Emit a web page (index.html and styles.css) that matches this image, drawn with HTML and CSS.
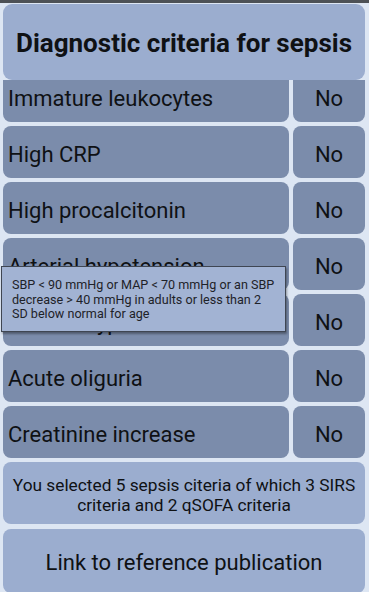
FILE: index.html
```html
<!DOCTYPE html>
<html lang="en">
  <head>
    <meta charset="UTF-8" />
    <meta name="viewport" content="width=device-width, initial-scale=1.0" />
    <title>Sepsis criteria</title>
    <link rel="stylesheet" href="styles.css">
  </head>
  <body>
    <div class="status-bar"></div>

    <div class="app">
      <div class="title-card">
        <h1>Diagnostic criteria for sepsis</h1>
      </div>

      <!-- Scrolled list, first row partly hidden under the title -->
      <div class="list-window">
        <div class="criteria-list">
          <div class="cell label">Immature leukocytes</div>
          <div class="cell answer">No</div>

          <div class="cell label">High CRP</div>
          <div class="cell answer">No</div>

          <div class="cell label">High procalcitonin</div>
          <div class="cell answer">No</div>

          <div class="cell label">Arterial hypotension</div>
          <div class="cell answer">No</div>

          <div class="cell label">Arterial hypoxemia</div>
          <div class="cell answer">No</div>

          <div class="cell label">Acute oliguria</div>
          <div class="cell answer">No</div>

          <div class="cell label">Creatinine increase</div>
          <div class="cell answer">No</div>
        </div>
      </div>

      <div class="summary-card">
        You selected 5 sepsis citeria of which 3 SIRS criteria and 2 qSOFA criteria
      </div>

      <div class="link-card">Link to reference publication</div>
    </div>

    <!-- Tooltip for the long-pressed row -->
    <div class="tooltip">
      SBP &lt; 90 mmHg or MAP &lt; 70 mmHg or an SBP decrease &gt; 40 mmHg in adults or less than 2 SD below normal for age
    </div>
  </body>
</html>
```

FILE: styles.css
```css
:root {
  --page-bg: #dde6f3;
  --light-card: #9badcf;
  --dark-cell: #7b8cab;
  --text: #0f1114;
  --status-bg: #4d5156;
}

* {
  margin: 0;
  padding: 0;
  box-sizing: border-box;
}

body {
  font-family: Roboto, "Noto Sans", sans-serif;
  background-color: var(--page-bg);
  color: var(--text);
  width: 369px;
  height: 592px;
  overflow: hidden;
  position: relative;
}

.status-bar {
  height: 3px;
  background-color: var(--status-bg);
}

.app {
  display: flex;
  flex-direction: column;
  padding: 1px 4px 0 3px;
}

/* Title */
.title-card {
  position: relative;
  z-index: 1;
  height: 76px;
  background-color: var(--light-card);
  border-radius: 9px;
  display: flex;
  align-items: center;
  justify-content: center;
  padding-top: 2px;
}

.title-card h1 {
  font-size: 26px;
  font-weight: 700;
  white-space: nowrap;
}

/* Criteria rows */
.list-window {
  height: 378px;
  overflow: hidden;
}

.criteria-list {
  display: grid;
  grid-template-columns: 1fr 72px;
  grid-auto-rows: 52px;
  gap: 4px;
  margin-top: -10px;
}

.cell {
  background-color: var(--dark-cell);
  border-radius: 8px;
  display: flex;
  align-items: center;
  font-size: 22px;
  padding-top: 4px;
}

.label {
  padding-left: 5px;
}

.answer {
  justify-content: center;
}

/* Summary and link */
.summary-card {
  margin-top: 4px;
  height: 62px;
  background-color: var(--light-card);
  border-radius: 8px;
  display: flex;
  align-items: center;
  justify-content: center;
  text-align: center;
  font-size: 17.3px;
  line-height: 20px;
  padding: 4px 2px 0;
}

.link-card {
  margin-top: 5px;
  height: 64px;
  background-color: var(--light-card);
  border-radius: 8px;
  display: flex;
  align-items: center;
  justify-content: center;
  font-size: 22px;
  padding-top: 2px;
}

/* Tooltip */
.tooltip {
  position: absolute;
  left: 1px;
  top: 266px;
  width: 285px;
  height: 66px;
  background-color: #a2b3d3;
  border: 1px solid #3f4652;
  box-shadow: 1px 2px 2px rgba(0, 0, 0, 0.35);
  padding: 11px 8px 0 10px;
  font-size: 12.6px;
  line-height: 14.5px;
  color: #1e2228;
}
```
